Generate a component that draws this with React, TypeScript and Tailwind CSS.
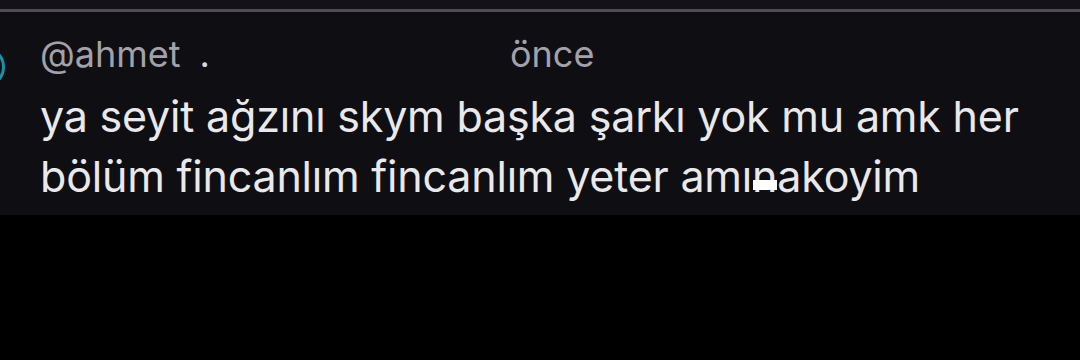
export default function App() {
  return (
    <div className="w-[1080px] h-[360px] bg-black overflow-hidden" style={{ fontFamily: "Inter, 'Liberation Sans', sans-serif" }}>
      <div className="h-[215px] bg-[#0f0e13] flex flex-col">
        <div className="h-[9px] bg-[#141218]" />
        <div className="h-[3px] bg-[#4d4c53]" />
        <div className="flex">
          {/* avatar, cut off at left edge */}
          <div className="w-[5px] overflow-hidden mt-[34px] shrink-0">
            <div className="w-[42px] h-[42px] rounded-full border-[3px] border-[#1a8fa8] -ml-[37px]" />
          </div>
          <div className="flex flex-col pl-[35px]">
            <div className="flex items-baseline h-[74px] pt-[24px] text-[36px] text-[#a3a2a8] leading-none">
              <span>@ahmet</span>
              <span className="ml-[19px] text-[#d8d8dc]">.</span>
              <span className="ml-[300px]">önce</span>
            </div>
            <p className="text-[43px] leading-[60px] text-[#e9e9ec] tracking-[-0.2px]">
              ya seyit ağzını skym başka şarkı yok mu amk her
              <br />
              bölüm fincanlım fincanlım yeter amı
              <span className="relative">
                n
                <span className="absolute left-[1px] top-[30px] w-[24px] h-[10px] bg-white" />
              </span>
              akoyim
            </p>
          </div>
        </div>
      </div>
    </div>
  );
}
